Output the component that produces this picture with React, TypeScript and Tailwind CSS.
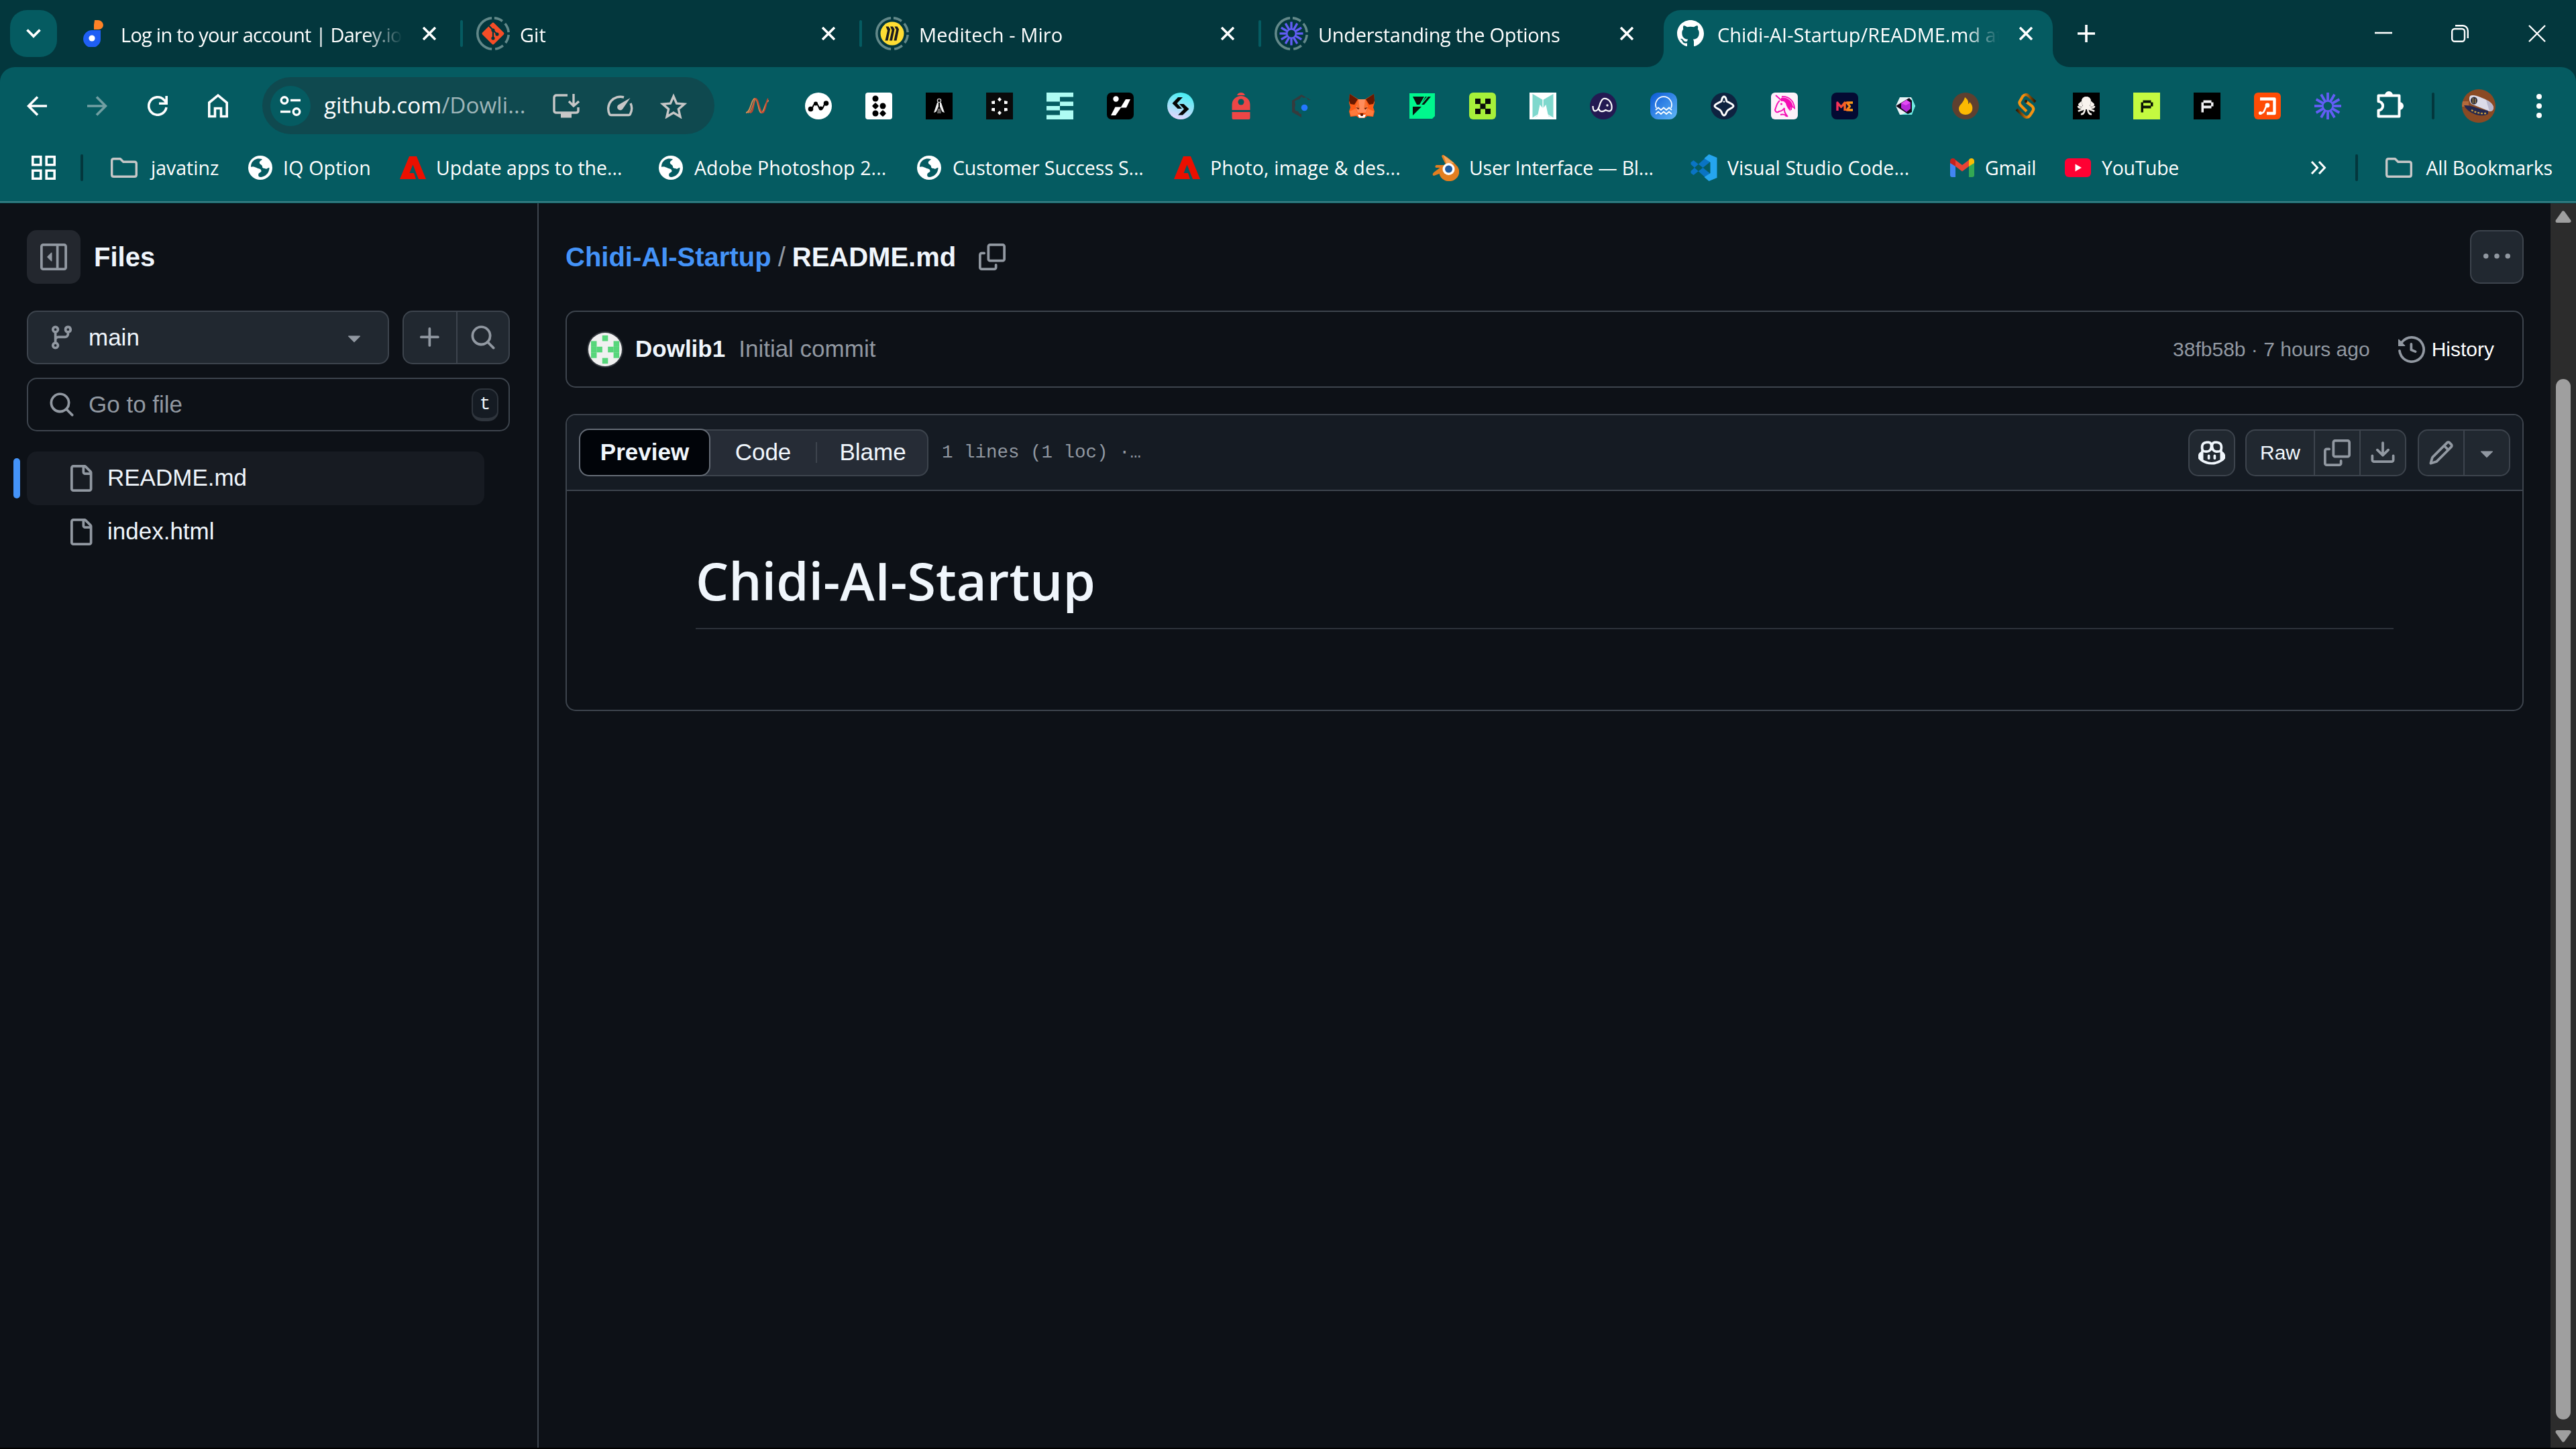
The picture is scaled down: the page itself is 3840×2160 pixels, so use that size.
import type { ReactNode } from "react";

/* ---------- Octicon-style 16px glyphs ---------- */
const OCT = {
  search:
    "M10.68 11.74a6 6 0 0 1-7.922-8.982 6 6 0 0 1 8.982 7.922l3.04 3.04a.749.749 0 0 1-.326 1.275.749.749 0 0 1-.734-.215ZM11.5 7a4.499 4.499 0 1 0-8.997 0A4.499 4.499 0 0 0 11.5 7Z",
  branch:
    "M9.5 3.25a2.25 2.25 0 1 1 3 2.122V6A2.5 2.5 0 0 1 10 8.5H6a1 1 0 0 0-1 1v1.128a2.251 2.251 0 1 1-1.5 0V5.372a2.25 2.25 0 1 1 1.5 0v1.836A2.493 2.493 0 0 1 6 7h4a1 1 0 0 0 1-1v-.628A2.25 2.25 0 0 1 9.5 3.25Zm-6 0a.75.75 0 1 0 1.5 0 .75.75 0 0 0-1.5 0Zm8.25-.75a.75.75 0 1 0 0 1.5.75.75 0 0 0 0-1.5ZM4.25 12a.75.75 0 1 0 0 1.5.75.75 0 0 0 0-1.5Z",
  plus: "M7.75 2a.75.75 0 0 1 .75.75V7h4.25a.75.75 0 0 1 0 1.5H8.5v4.25a.75.75 0 0 1-1.5 0V8.5H2.75a.75.75 0 0 1 0-1.5H7V2.75A.75.75 0 0 1 7.75 2Z",
  file: "M2 1.75C2 .784 2.784 0 3.75 0h6.586c.464 0 .909.184 1.237.513l2.914 2.914c.329.328.513.773.513 1.237v9.586A1.75 1.75 0 0 1 13.25 16h-9.5A1.75 1.75 0 0 1 2 14.25Zm1.75-.25a.25.25 0 0 0-.25.25v12.5c0 .138.112.25.25.25h9.5a.25.25 0 0 0 .25-.25V6h-2.75A1.75 1.75 0 0 1 9 4.25V1.5Zm6.75.062V4.25c0 .138.112.25.25.25h2.688l-.011-.013-2.914-2.914-.013-.011Z",
  copy: "M0 6.75C0 5.784.784 5 1.75 5h1.5a.75.75 0 0 1 0 1.5h-1.5a.25.25 0 0 0-.25.25v7.5c0 .138.112.25.25.25h7.5a.25.25 0 0 0 .25-.25v-1.5a.75.75 0 0 1 1.5 0v1.5A1.75 1.75 0 0 1 9.25 16h-7.5A1.75 1.75 0 0 1 0 14.25ZM5 1.75C5 .784 5.784 0 6.75 0h7.5C15.216 0 16 .784 16 1.75v7.5A1.75 1.75 0 0 1 14.25 11h-7.5A1.75 1.75 0 0 1 5 9.25Zm1.75-.25a.25.25 0 0 0-.25.25v7.5c0 .138.112.25.25.25h7.5a.25.25 0 0 0 .25-.25v-7.5a.25.25 0 0 0-.25-.25Z",
  download:
    "M2.75 14A1.75 1.75 0 0 1 1 12.25v-2.5a.75.75 0 0 1 1.5 0v2.5c0 .138.112.25.25.25h10.5a.25.25 0 0 0 .25-.25v-2.5a.75.75 0 0 1 1.5 0v2.5A1.75 1.75 0 0 1 13.25 14ZM7.25 7.689V2a.75.75 0 0 1 1.5 0v5.689l1.97-1.969a.749.749 0 1 1 1.06 1.06l-3.25 3.25a.749.749 0 0 1-1.06 0L4.22 6.78a.749.749 0 1 1 1.06-1.06l1.97 1.969Z",
  pencil:
    "M11.013 1.427a1.75 1.75 0 0 1 2.474 0l1.086 1.086a1.75 1.75 0 0 1 0 2.474l-8.61 8.61c-.21.21-.47.364-.756.445l-3.251.93a.75.75 0 0 1-.927-.928l.929-3.25c.081-.286.235-.547.445-.758l8.61-8.61Zm.176 4.823L9.75 4.81l-6.286 6.287a.253.253 0 0 0-.064.108l-.558 1.953 1.953-.558a.253.253 0 0 0 .108-.064Zm1.238-3.763a.25.25 0 0 0-.354 0L10.811 3.75l1.439 1.44 1.263-1.263a.25.25 0 0 0 0-.354Z",
  triangle: "m4.427 7.427 3.396 3.396a.25.25 0 0 0 .354 0l3.396-3.396A.25.25 0 0 0 11.396 7H4.604a.25.25 0 0 0-.177.427Z",
  history:
    "m.427 1.927 1.215 1.215a8.002 8.002 0 1 1-1.6 5.685.75.75 0 1 1 1.493-.154 6.5 6.5 0 1 0 1.18-4.458l1.358 1.358A.25.25 0 0 1 3.896 6H.25A.25.25 0 0 1 0 5.75V2.104a.25.25 0 0 1 .427-.177ZM7.75 4a.75.75 0 0 1 .75.75v2.992l2.028.812a.75.75 0 0 1-.557 1.392l-2.5-1A.751.751 0 0 1 7 8.25v-3.5A.75.75 0 0 1 7.75 4Z",
  sidebar:
    "M4.177 7.823l2.396-2.396A.25.25 0 0 1 7 5.604v4.792a.25.25 0 0 1-.427.177L4.177 8.177a.25.25 0 0 1 0-.354ZM0 1.75C0 .784.784 0 1.75 0h12.5C15.216 0 16 .784 16 1.75v12.5A1.75 1.75 0 0 1 14.25 16H1.75A1.75 1.75 0 0 1 0 14.25Zm1.75-.25a.25.25 0 0 0-.25.25v12.5c0 .138.112.25.25.25H9.5v-13Zm12.5 13a.25.25 0 0 0 .25-.25V1.75a.25.25 0 0 0-.25-.25H11v13Z",
  kebab:
    "M8 9a1.5 1.5 0 1 0 0-3 1.5 1.5 0 0 0 0 3ZM1.5 9a1.5 1.5 0 1 0 0-3 1.5 1.5 0 0 0 0 3Zm13 0a1.5 1.5 0 1 0 0-3 1.5 1.5 0 0 0 0 3Z",
  copilot:
    "M7.998 15.035c-4.562 0-7.873-2.914-7.998-3.749V9.338c.085-.628.677-1.686 1.588-2.065.013-.07.024-.143.036-.218.029-.183.06-.384.126-.612-.201-.508-.254-1.084-.254-1.656 0-.87.128-1.769.693-2.484.579-.733 1.494-1.124 2.724-1.261 1.206-.134 2.262.034 2.944.765.05.053.096.108.139.165.044-.057.094-.112.143-.165.682-.731 1.738-.899 2.944-.765 1.23.137 2.145.528 2.724 1.261.566.715.693 1.614.693 2.484 0 .572-.053 1.148-.254 1.656.066.228.098.429.126.612.012.076.024.148.037.218.924.385 1.522 1.471 1.591 2.095v1.872c0 .766-3.351 3.795-8.002 3.795Zm0-1.485c2.28 0 4.584-1.11 5.002-1.433V7.862l-.023-.116c-.49.21-1.075.291-1.727.291-1.146 0-2.059-.327-2.71-.991A3.222 3.222 0 0 1 8 6.303a3.24 3.24 0 0 1-.544.743c-.65.664-1.563.991-2.71.991-.652 0-1.236-.081-1.727-.291l-.023.116v4.255c.419.323 2.722 1.433 5.002 1.433ZM6.762 2.83c-.193-.206-.637-.413-1.682-.297-1.019.113-1.479.404-1.713.7-.247.312-.369.789-.369 1.554 0 .793.129 1.171.308 1.371.162.181.519.379 1.442.379.853 0 1.339-.235 1.638-.54.315-.322.527-.827.617-1.553.117-.935-.037-1.395-.241-1.614Zm4.155-.297c-1.044-.116-1.488.091-1.681.297-.204.219-.359.679-.242 1.614.091.726.303 1.231.618 1.553.299.305.784.54 1.638.54.922 0 1.28-.198 1.442-.379.179-.2.308-.578.308-1.371 0-.765-.123-1.242-.37-1.554-.233-.296-.693-.587-1.713-.7ZM6.25 9.037a.75.75 0 0 1 .75.75v1.501a.75.75 0 0 1-1.5 0V9.787a.75.75 0 0 1 .75-.75Zm4.25.75v1.501a.75.75 0 0 1-1.5 0V9.787a.75.75 0 0 1 1.5 0Z",
  github:
    "M8 0c4.42 0 8 3.58 8 8a8.013 8.013 0 0 1-5.45 7.59c-.4.08-.55-.17-.55-.38 0-.27.01-1.13.01-2.2 0-.75-.25-1.23-.54-1.48 1.78-.2 3.65-.88 3.65-3.95 0-.88-.31-1.59-.82-2.15.08-.2.36-1.02-.08-2.12 0 0-.67-.22-2.2.82-.64-.18-1.32-.27-2-.27-.68 0-1.36.09-2 .27-1.53-1.03-2.2-.82-2.2-.82-.44 1.1-.16 1.92-.08 2.12-.51.56-.82 1.28-.82 2.15 0 3.06 1.86 3.75 3.64 3.95-.23.2-.44.55-.51 1.07-.46.21-1.61.55-2.33-.66-.15-.24-.6-.83-1.23-.82-.67.01-.27.38.01.53.34.19.73.9.82 1.13.16.45.68 1.31 2.69.94 0 .67.01 1.3.01 1.49 0 .21-.15.45-.55.38A7.995 7.995 0 0 1 0 8c0-4.42 3.58-8 8-8Z",
};

function Oct({ name, className = "" }: { name: keyof typeof OCT; className?: string }) {
  return (
    <svg viewBox="0 0 16 16" fill="currentColor" className={`size-10 shrink-0 ${className}`}>
      <path d={OCT[name]} />
    </svg>
  );
}

/* 40x40 drawing surface used by favicons and toolbar icons */
function Pic({ children, className = "size-10" }: { children: ReactNode; className?: string }) {
  return (
    <svg viewBox="0 0 40 40" fill="none" className={`shrink-0 ${className}`}>
      {children}
    </svg>
  );
}

/* ---------- Tab strip ---------- */
function LoadingRing({ children }: { children: ReactNode }) {
  return (
    <svg viewBox="0 0 50 50" fill="none" className="size-[50px] shrink-0">
      <circle cx="25" cy="25" r="23.2" stroke="#628889" strokeWidth="3.6" pathLength="360" strokeDasharray="0 5 32 13 32 13 170 10 32 13 35 5" />
      {children}
    </svg>
  );
}

const RAYS = [0, 30, 60, 90, 120, 150, 180, 210, 240, 270, 300, 330];

function Burst({ cx, cy, r }: { cx: number; cy: number; r: number }) {
  return (
    <g transform={`translate(${cx} ${cy}) scale(${r / 20})`}>
      {RAYS.map((a) => (
        <rect key={a} x="-1.9" y="-20" width="3.8" height="13" fill="#625df5" transform={`rotate(${a})`} />
      ))}
      <circle r="7.6" stroke="#625df5" strokeWidth="2.6" />
    </g>
  );
}

function CloseX() {
  return (
    <svg viewBox="0 0 20 20" className="size-5 shrink-0" stroke="#fff" strokeWidth="3.6">
      <path d="M1 1 19 19M19 1 1 19" />
    </svg>
  );
}

function Tab({ icon, title, last }: { icon: ReactNode; title: ReactNode; last?: boolean }) {
  return (
    <div className={`flex h-[100px] shrink-0 items-center pl-5 ${last ? "w-[575px]" : "w-[595px]"}`}>
      <div className="flex w-[50px] shrink-0 justify-center">{icon}</div>
      <div className="ml-[15px] w-[420px] shrink-0 whitespace-nowrap pt-[3px] text-[29px] [mask-image:linear-gradient(to_right,black_87%,transparent)]">
        {title}
      </div>
      <div className="ml-[30px]">
        <CloseX />
      </div>
      {!last && <div className="ml-auto h-10 w-1 rounded-full bg-[#055b61]" />}
    </div>
  );
}

function TabStrip() {
  return (
    <div className="flex h-[100px] items-center bg-[#03373d] pl-[15px] text-white">
      <div className="mr-[10px] flex size-[70px] items-center justify-center rounded-[25px] bg-[#055b61]">
        <svg viewBox="0 0 22 14" className="w-[22px]" fill="none" stroke="#fff" strokeWidth="3.8">
          <path d="M1.5 1.5 11 11 20.5 1.5" />
        </svg>
      </div>
      <Tab
        title={<span className="tracking-[-0.75px]">Log in to your account | Darey.io</span>}
        icon={
          <Pic>
            <path d="M22 0h5a8 8 0 0 1 8 7v0a7 7 0 0 1-7 7h-7V7Z" transform="translate(-1)" fill="#ff8226" />
            <path d="M17 15h13v12a13 13 0 1 1-13-12Z" fill="#1f5ff5" />
            <circle cx="17" cy="27" r="4.6" fill="#fff" />
          </Pic>
        }
      />
      <Tab
        title="Git"
        icon={
          <LoadingRing>
            <rect x="12.8" y="12.8" width="24.4" height="24.4" rx="2" fill="#f64d27" transform="rotate(45 25 25)" />
            <path d="m19 13.5 6 6.5v12M25.500 20.500l5 5" stroke="#03373d" strokeWidth="2.2" />
            <circle cx="25" cy="20" r="2.600" fill="#03373d" />
            <circle cx="25" cy="32" r="2.600" fill="#03373d" />
            <circle cx="31" cy="26" r="2.600" fill="#03373d" />
          </LoadingRing>
        }
      />
      <Tab
        title={<span className="tracking-[0.1px]">Meditech - Miro</span>}
        icon={
          <LoadingRing>
            <circle cx="25" cy="25" r="17.500" fill="#ffdd33" />
            <path d="M15.500 14.500h4l2.500 4-3.500 17h-4l3.500-15Z M22 14.500h4l2.500 4-3.500 17h-4l3.500-15.500Z M28.500 14.500h4l2.500 4-3.500 17h-4l3.500-16Z" fill="#1c1c1e" />
          </LoadingRing>
        }
      />
      <Tab
        last
        title={<span className="tracking-[-0.3px]">Understanding the Options</span>}
        icon={
          <LoadingRing>
            <Burst cx={25} cy={25} r={17.5} />
          </LoadingRing>
        }
      />
      {/* active tab with its two concave feet */}
      <div className="size-[25px] self-end bg-[#055b61]">
        <div className="size-full rounded-br-[25px] bg-[#03373d]" />
      </div>
      <div className="mt-[15px] flex h-[85px] w-[580px] shrink-0 items-center rounded-t-[25px] bg-[#055b61] pb-[15px] pl-5">
        <Oct name="github" />
        <div className="ml-5 w-[420px] shrink-0 whitespace-nowrap pt-[3px] text-[29px] [mask-image:linear-gradient(to_right,black_88%,transparent)]">
          Chidi-AI-Startup/README.md at
        </div>
        <div className="ml-[30px]">
          <CloseX />
        </div>
      </div>
      <div className="size-[25px] self-end bg-[#055b61]">
        <div className="size-full rounded-bl-[25px] bg-[#03373d]" />
      </div>
      <svg viewBox="0 0 26 26" className="ml-3 size-[26px]" stroke="#fff" strokeWidth="3.600">
        <path d="M13 0v26M0 13h26" />
      </svg>
      <svg viewBox="0 0 26 26" className="ml-auto size-[26px]" stroke="#fff" strokeWidth="2.600">
        <path d="M0 12h26" />
      </svg>
      <svg viewBox="0 0 26 26" className="ml-[88px] size-[26px]" fill="none" stroke="#fff" strokeWidth="2.400">
        <rect x="1.200" y="6" width="18.800" height="18.800" rx="4" />
        <path d="M6 1.200h11a7.500 7.500 0 0 1 7.800 7.500V20" />
      </svg>
      <svg viewBox="0 0 26 26" className="ml-[89px] mr-[45px] size-[26px]" stroke="#fff" strokeWidth="2.400">
        <path d="M1 1 25 25M25 1 1 25" />
      </svg>
    </div>
  );
}

/* ---------- Extension icons, left to right ---------- */
const PIXEL_P = "M14.500 11.500h12v3h3v6h-3v3H15v6h-3.500V14.500h3Zm.5 4v4h11v-4Z";

const EXTENSIONS: ReactNode[] = [
  <>
    <path d="M2 30c7 0 8-21 13-21 6 0 5 21 10 21 5-1 5-17 11-18" stroke="#d98d55" strokeWidth="1.900" />
    <path d="M8 30c6 0 5-16 8-21 5-1 6 21 11 21 5-2 5-19 8-21" stroke="#c2452f" strokeWidth="1.900" />
    <path d="M5 30c6 0 8-17 11-21" stroke="#d4703f" strokeWidth="1.400" />
  </>,
  <>
    <circle cx="20" cy="20" r="20" fill="#fff" />
    <path d="M8 25c4 0 4-9 8-9s4 9 8 9 3-9 8-9" stroke="#000" strokeWidth="2" />
    <circle cx="8.500" cy="24.500" r="3.800" fill="#000" />
    <circle cx="16" cy="16.500" r="3" fill="#000" />
    <circle cx="23.500" cy="23.500" r="3" fill="#000" />
    <circle cx="31.500" cy="16" r="3.800" fill="#000" />
  </>,
  <>
    <rect width="40" height="40" rx="4" fill="#fff" />
    <circle cx="15" cy="9" r="4.500" fill="#000" />
    <path d="m15 15 5 5-5 5-5-5Z" fill="#000" />
    <circle cx="26" cy="20" r="4.500" fill="#000" />
    <circle cx="15" cy="31" r="4.500" fill="#000" />
    <path d="m26 26 5 5-5 5-5-5Z" fill="#000" />
    <circle cx="15" cy="20" r="3.600" fill="#000" />
    <circle cx="26" cy="31" r="3.600" fill="#000" />
  </>,
  <>
    <rect width="40" height="40" fill="#000" />
    <circle cx="20" cy="12" r="2.600" stroke="#ccc" strokeWidth="1.400" />
    <path d="m17 15-5 15 3.500-1.500L19 21v-6Zm6 0 5 15-3.500-1.500L21 21v-6Z" fill="#eee" />
    <path d="M18 24h4l1 7h-6Z" fill="#666" />
  </>,
  <>
    <rect width="40" height="40" fill="#0a0a0a" />
    <path d="m20 7 3 3.200-3 3.200-3-3.200ZM20 27l3 3.200-3 3.200-3-3.200ZM8 13l5-1v5H8.500ZM27 12l5 1-.5 4H27ZM8.500 23H13v5l-5-1ZM27 23h4.500l.5 4-5 1Z" fill="#fff" />
  </>,
  <path d="M0 0h40v6.500H20v7h20v6.500H20v6.500h20V40H0v-6.500h20v-7H0V20h20v-6.500H0Z" fill="#aefcf3" />,
  <>
    <rect width="40" height="40" rx="7" fill="#000" />
    <circle cx="13.500" cy="9.500" r="4.200" fill="#fff" />
    <path d="M28 10h7l-6 12.500h-8L13 34H6l6.500-12.500H21Z" fill="#fff" />
  </>,
  <>
    <defs>
      <linearGradient id="bitget" x1=".7" y1="0" x2=".4" y2="1">
        <stop offset="0" stopColor="#3ff0f2" />
        <stop offset=".55" stopColor="#9ae2f8" />
        <stop offset="1" stopColor="#e6d5ff" />
      </linearGradient>
    </defs>
    <circle cx="20" cy="20" r="20" fill="url(#bitget)" />
    <path d="M16 7h7l-8.500 9 7.500 8h-6.500l-8-8ZM18 17h6.500l8 7.500-9.500 9h-7l9-9Z" fill="#050505" />
  </>,
  <>
    <path d="M14 4a6.500 6.500 0 0 1 12 0ZM6.500 26V18a13.500 13 0 0 1 27 0v8ZM6.500 29h27v9a2 2 0 0 1-2 2h-23a2 2 0 0 1-2-2Z" fill="#ee4646" />
    <circle cx="20" cy="14" r="4.500" fill="#055b61" />
  </>,
  <>
    <path d="M34 11 20 3 6 12v17l14 8v-5l-3-1-2-3-4-1-1-4 1-5-1-5 3-2 4-1 3-4 3 2 4-1 3 4Z" fill="#363b3d" />
    <circle cx="24.500" cy="22.500" r="4.800" fill="#2478ff" />
  </>,
  <>
    <path d="M2 2 15 10h10L38 2l1 13-2 7 2 6-2 8-9-1-4 3h-8l-4-3-9 1-2-8 2-6-2-7Z" fill="#ff5c16" />
    <path d="M2 2 14 10 9 18l-6-1-2-5ZM38 2 26 10l5 8 6-1 2-5Z" fill="#661800" />
    <path d="M15 10h10l4 12-3 8H14l-3-8Z" fill="#ff8d5d" />
    <path d="m15 10-4 10 6 5ZM25 10l4 10-6 5Z" fill="#f9702f" />
    <path d="m2 28 9-4 4 9-11 2ZM38 28l-9-4-4 9 11 2Z" fill="#ff7a3c" />
    <path d="M14 33h12l-2 4.500h-8Z" fill="#fff" />
    <path d="M17.500 31h5l-1 4h-3ZM11 22l5 1-1 2.500ZM29 22l-5 1 1 2.500Z" fill="#661800" />
  </>,
  <>
    <path d="M1 1h38v34l-4 4H1Z" fill="#00f78d" />
    <path d="M6 6h17l-7 12h-4ZM25 6h8l-10 12h-5ZM6 21h13L6 34Z" fill="#0a120e" />
    <path d="M28 6 18 18" stroke="#00f78d" strokeWidth="1.500" />
  </>,
  <>
    <rect width="40" height="40" rx="6" fill="#a6f03a" />
    <path d="M9 9h8v8H9ZM24 9h8v8h-8ZM16.500 16.500h8v8h-8ZM9 24h8v8H9ZM24 24h8v8h-8Z" fill="#0a0a0a" />
  </>,
  <>
    <rect width="40" height="40" fill="#fff" />
    <path d="M4.500 2 20 11 35.500 2v36L28 35 24.500 18 20 23.500 15.500 18 12 35l-7.500 3Z" fill="#7fd8cd" />
    <path d="M20 10v14M4.500 38 13 33M35.500 38 27 33" stroke="#fff" strokeWidth="1.400" />
  </>,
  <>
    <circle cx="20" cy="20" r="20" fill="#231a52" />
    <path d="M4.500 20c0 7 2 8 5 7 6-2 4-15 11-18 8-1 13 7 12 15-1 5-5 4-9 2-4 3-10 3-10-2" stroke="#fff" strokeWidth="2.200" />
    <circle cx="26" cy="19" r="1.700" fill="#fff" />
  </>,
  <>
    <defs>
      <linearGradient id="wave" x1="0" y1="0" x2="1" y2="1">
        <stop offset="0" stopColor="#0a58d6" />
        <stop offset="1" stopColor="#62b8f8" />
      </linearGradient>
    </defs>
    <rect width="40" height="40" rx="12" fill="url(#wave)" />
    <path d="M9 23a12 12 0 1 1 22 0M8 26l4-3.500 4 3.500 4-3.500 4 3.500 4-3.500 4 3.500M8 32l4-3.500 4 3.500 4-3.500 4 3.500 4-3.500 4 3.500" stroke="#fff" strokeWidth="1.800" />
  </>,
  <>
    <circle cx="20" cy="20" r="20" fill="#0e2340" />
    <path d="M20 6c3 0 3 4 4 7 3 2 10 4 10 7s-7 4-9 7c-2 2-2 7-5 7s-3-5-5-7c-2-3-9-4-9-7s7-5 10-7c1-3 1-7 4-7Z" stroke="#fff" strokeWidth="3" />
    <circle cx="20" cy="13.500" r="1.200" fill="#fff" />
  </>,
  <>
    <rect width="40" height="40" rx="6" fill="#fdf1fa" />
    <path d="m7 4 9 8M16 6c9-1 18 5 19 17-3-3-5-2-5 3" stroke="#f50db4" strokeWidth="1.800" />
    <path d="M15 8c8-2 17 4 18 14-3-2-5 0-4 6-3-3-6-7-7-12-2-3-4-4-7-3Z" fill="#f50db4" />
    <path d="M13 12c-4 3-5 8-7 14 1 4 4 4 6 2 3 0 6-2 8-5-1 5 1 8 5 13M14 33c4-1 8 0 9 3" stroke="#f50db4" strokeWidth="2" />
    <circle cx="15.500" cy="17" r="1.500" fill="#f50db4" />
  </>,
  <>
    <defs>
      <linearGradient id="me" x1="0" y1="0" x2="40" y2="0" gradientUnits="userSpaceOnUse">
        <stop offset=".15" stopColor="#f5206b" />
        <stop offset=".5" stopColor="#f8641f" />
        <stop offset=".85" stopColor="#ffb713" />
      </linearGradient>
    </defs>
    <rect width="40" height="40" rx="8" fill="#040a33" />
    <path d="M9 27V15l5.500 6.500L20 15l0 12M32 15h-9l4.500 5.500L23 26h9" stroke="url(#me)" strokeWidth="3.400" strokeLinejoin="round" />
  </>,
  <>
    <path d="M12 7h17l6 13-6 13H12L6 20Z" fill="#e8f3f6" />
    <path d="m30 8 5 12-5 13H14l14-5Z" fill="#6febe4" />
    <path d="M26 8 30 12v17l-6 3L6 20Z" fill="#150b1c" />
    <path d="m14 16 8-5 6 4v9l-6 5-8-6Z" fill="#b727d8" />
    <path d="m14 16 8-5 6 4-7 4Z" fill="#e44af5" />
  </>,
  <>
    <circle cx="20" cy="20" r="20" fill="#5e4030" />
    <path d="M19 7c6 4 5 8 5 10 1 0 2-2 2-3 4 4 5 8 4 12-1 4-5 7-10 7-6 0-10-4-10-9 0-6 7-8 9-17Z" fill="#fcb902" />
  </>,
  <>
    <defs>
      <linearGradient id="sgTop" x1="1" y1=".4" x2="0" y2=".6">
        <stop offset="0" stopColor="#2b1400" />
        <stop offset=".6" stopColor="#f28d10" />
        <stop offset="1" stopColor="#f79512" />
      </linearGradient>
      <linearGradient id="sgBottom" x1="0" y1=".6" x2="1" y2=".4">
        <stop offset="0" stopColor="#2b1400" />
        <stop offset=".6" stopColor="#f28d10" />
        <stop offset="1" stopColor="#f79512" />
      </linearGradient>
    </defs>
    <path d="M34 14 24 5c-3-3-7-2-9 1l-4 7c-2 3 0 5 2 7l8 8" stroke="url(#sgTop)" strokeWidth="4.200" />
    <path d="m6 25 11 10c3 3 7 2 9-1l4-6c2-3 1-6-1-8l-8-6" stroke="url(#sgBottom)" strokeWidth="4.200" />
    <circle cx="20" cy="13" r="2.200" fill="#3b1a00" />
  </>,
  <>
    <rect width="40" height="40" fill="#000" />
    <path d="M20 6c5 0 8 4 7 9l-2 6c3 1 7 0 7-4M20 6c-5 0-8 4-7 9l2 6c-3 1-7 0-7-4" fill="#f8f3ee" />
    <ellipse cx="20" cy="14" rx="7" ry="8" fill="#f8f3ee" />
    <path d="M16 20c-1 5-8 3-8 0m24 0c0 3-7 5-8 0M17 22c-1 5-6 3-9 6m15-6c1 5 6 3 9 6M18 23c0 5-2 10-6 9m10-9c0 5 2 10 6 9" stroke="#f8f3ee" strokeWidth="2.600" />
    <path d="M15 17h10v8H15Z" fill="#f8f3ee" />
  </>,
  <>
    <rect width="40" height="40" fill="#c4fa40" />
    <path d={PIXEL_P} fill="#0b1405" fillRule="evenodd" />
  </>,
  <>
    <rect width="40" height="40" fill="#000" />
    <path d={PIXEL_P} fill="#f1f1f4" fillRule="evenodd" />
  </>,
  <>
    <rect width="40" height="40" rx="6" fill="#ff4c05" />
    <path d="M9 9.500h21.500V31H19" stroke="#fff" strokeWidth="4.400" strokeLinejoin="round" />
    <path d="M9 31c7 0 6-5 9.500-11" stroke="#fff" strokeWidth="2.600" />
    <circle cx="20" cy="19" r="3.400" fill="#fff" />
    <circle cx="9.500" cy="30.500" r="2.600" fill="#fff" />
  </>,
  <Burst cx={20} cy={20} r={20} />,
];

function Folder() {
  return (
    <svg viewBox="0 0 40 30" className="h-[30px] w-10 shrink-0" fill="none" stroke="#c7c7c7" strokeWidth="3.400" strokeLinejoin="round">
      <path d="M1.700 4.500c0-1.600 1.200-2.800 2.800-2.800h9.800l4.500 4.500h16.700c1.600 0 2.800 1.200 2.800 2.800v16.500c0 1.600-1.200 2.800-2.800 2.800h-31c-1.600 0-2.800-1.200-2.800-2.800Z" />
    </svg>
  );
}

function Toolbar() {
  return (
    <div className="bg-[#03373d]">
      <div className="flex h-[115px] items-center rounded-t-[22px] bg-[#055b61] text-white">
        <svg viewBox="0 0 30 30" className="ml-10 size-[30px]" fill="none" stroke="#fff" strokeWidth="3.600">
          <path d="M30 15H3M16 1.500 2.500 15 16 28.500" />
        </svg>
        <svg viewBox="0 0 30 30" className="ml-[60px] size-[30px]" fill="none" stroke="#719fa2" strokeWidth="3.600">
          <path d="M0 15h27M14 1.500 27.500 15 14 28.500" />
        </svg>
        <svg viewBox="0 0 30 30" className="ml-[60px] size-[30px]" fill="none" stroke="#fff" strokeWidth="3.600">
          <path d="M28 17a13.200 13.200 0 1 1-3.700-11.300L28 9.500M28.200 0v11.200H17" />
        </svg>
        <svg viewBox="0 0 30 36" className="ml-[60px] h-9 w-[30px]" fill="none" stroke="#fff" strokeWidth="3.600">
          <path d="M1.800 13 15 2.200 28.200 13v20.500h-8.700V21.500h-9v12H1.800Z" />
        </svg>
        <div className="ml-[51px] flex h-[85px] w-[674px] shrink-0 items-center rounded-full bg-[#0f494f] pl-3">
          <div className="flex size-[60px] items-center justify-center rounded-full bg-[#055b61]">
            <svg viewBox="0 0 32 30" className="h-[30px] w-8" fill="none" stroke="#fff" strokeWidth="3.400">
              <circle cx="7" cy="6.500" r="4.800" />
              <path d="M16 6.500h15M1 23.500h15" />
              <circle cx="25" cy="23.500" r="4.800" />
            </svg>
          </div>
          <div className="ml-[20px] w-[303px] whitespace-nowrap pb-0.5 text-[33.300px]">
            github.com<span className="text-[#9fb6b9]">/Dowli...</span>
          </div>
          <div className="ml-[38px] flex items-center gap-10">
            <svg viewBox="0 0 40 36" className="h-9 w-10" fill="none" stroke="#c7c7c7" strokeWidth="3.400">
              <path d="M22 2H5.500Q2 2 2 5.500v19.500Q2 28 5.500 28h29q3.500 0 3.500-3v-5M31 0v17M24 11l7 7 8-7" />
              <path d="M12 29h16v6.500H12Z" fill="#c7c7c7" stroke="none" />
            </svg>
            <svg viewBox="0 0 40 32" className="h-8 w-10" fill="none" stroke="#c7c7c7" strokeWidth="3.400">
              <path d="M26 3A18 18 0 0 0 4.500 28Q5 29.500 7 29.500h26q2 0 2.500-1.500A18 18 0 0 0 36 12" />
              <path d="M35.500 4 24.500 20a4.500 4.500 0 1 1-7-5.500Z" fill="#c7c7c7" stroke="none" />
            </svg>
            <svg viewBox="0 0 40 38" className="h-[38px] w-10" fill="none" stroke="#c7c7c7" strokeWidth="3.400">
              <path d="m20 4.500 4.600 10.600 11.500 1-8.700 7.600 2.600 11.300L20 29l-10 6 2.600-11.300-8.700-7.600 11.500-1Z" />
            </svg>
          </div>
        </div>
        <div className="ml-[45px] flex shrink-0 gap-[50px]">
          {EXTENSIONS.map((icon, i) => (
            <Pic key={i}>{icon}</Pic>
          ))}
        </div>
        <svg viewBox="0 0 42 42" className="-mt-1 ml-[51px] h-[42px] w-[42px]" fill="none" stroke="#fff" strokeWidth="4" strokeLinejoin="round">
          <path d="M4.500 7.500h31v31h-31v-9a6.600 6.600 0 0 0 0-13.200Z" />
          <path d="M14 7a6 6 0 0 1 12 0ZM36 17a6 6 0 0 1 0 12Z" fill="#fff" stroke="none" />
        </svg>
        <div className="ml-[42px] h-10 w-1 rounded-full bg-[#03373d]" />
        <svg viewBox="0 0 50 50" className="ml-[41px] size-[50px]">
          <defs>
            <clipPath id="profile">
              <circle cx="25" cy="25" r="25" />
            </clipPath>
          </defs>
          <g clipPath="url(#profile)">
            <path d="M0 0h50v50H0Z" fill="#8a4a24" />
            <path d="M0 18h10v8H0Z" fill="#b26a3c" />
            <path d="M12 10q5-3 18 3 16 6 17 14 0 6-6 6L14 22Q9 16 12 10Z" fill="#dcdbe8" />
            <path d="M36 16q10 5 11 11 0 6-6 6Z" fill="#b9b7cc" />
            <path d="M3 24q10 0 17 3 10 4 19 5v5q-7 4-18 1Q7 33 3 24Z" fill="#23274f" />
            <path d="M14 31q10 6 22 5" stroke="#c99a3b" strokeWidth="2.400" strokeDasharray="3 2" fill="none" />
            <ellipse cx="18" cy="17" rx="5" ry="5.500" fill="#2b2b3d" />
            <path d="M16.500 13v8M20 14v7" stroke="#a58546" strokeWidth="1.400" />
          </g>
        </svg>
        <svg viewBox="0 0 8 36" className="ml-[61px] h-9 w-2" fill="#fff">
          <circle cx="4" cy="4" r="4" />
          <circle cx="4" cy="18" r="4" />
          <circle cx="4" cy="32" r="4" />
        </svg>
      </div>
    </div>
  );
}

/* ---------- Bookmarks bar ---------- */
function Globe() {
  return (
    <svg viewBox="0 0 36 36" className="size-9 shrink-0">
      <circle cx="18" cy="18" r="18" fill="#fff" />
      <path d="M4 17C4 10 8 6 14 4.500c3 0 6 0 7 1-3 3-5 3-4 6 1 2 4 2 4 5s3 2 5 3 3-2 5.500-1.500c0 8-6 13.500-13 14-3 0-4-2-3-5 1-2 4-2 4-4 0-4-4-3-7-5-3-1-5-2-8.500-1Z" fill="#055b61" />
      <path d="M14 7c-2 3-1 6 1 7 2 2 5 1 5 4 1 3 3 2 3 5 0 2-3 3-4 5" stroke="#055b61" strokeWidth="2" fill="none" />
    </svg>
  );
}

function Adobe() {
  return (
    <svg viewBox="0 0 39 34" className="h-[34px] w-[39px] shrink-0" fill="#eb1000">
      <path d="M14 0h11l14 34H28L19.500 12.500 14.500 25h6.500l3 9H0Z" />
    </svg>
  );
}

const blender = (
  <Pic className="h-10 w-[41px]">
    <path d="M17 1c3 1 14 9 19 15a15 14 0 1 1-25 13L3 32c-3-1-2-4 1-6l8-6H6c-2-1-1-4 1-4h14L15 4c-1-2 0-3 2-3Z" fill="#e37e20" />
    <path d="M17 1 33 13 22 15Z" fill="#f5a55a" />
    <circle cx="25" cy="22" r="9" fill="#fff" />
    <circle cx="25" cy="22" r="5.500" fill="#1f5a9e" />
  </Pic>
);

const vscode = (
  <Pic className="h-10 w-[41px]">
    <path d="M29 12 5 31 1 28v-3l22-20ZM29 28 5 9 1 12v3l22 20Z" fill="#0a74c4" />
    <path d="m28 0 12 5v30l-12 5-7-6 9-6V12l-9-6Z" fill="#25a5ef" />
  </Pic>
);

const gmail = (
  <svg viewBox="0 0 36 28" className="h-7 w-9 shrink-0">
    <path d="M0 6h8v22H3q-3 0-3-3Z" fill="#4285f4" />
    <path d="M28 6h8v19q0 3-3 3h-5Z" fill="#34a853" />
    <path d="M8 12 18 19.500 28 12V2.500L18 10 8 2.500Z" fill="#ea4335" />
    <path d="M0 4.500Q0 0 4.500 0 6.500 0 8 2v10L0 7Z" fill="#c5221f" />
    <path d="M36 4.500Q36 0 31.500 0 29.500 0 28 2v10l8-5Z" fill="#fbbc04" />
  </svg>
);

const youtube = (
  <svg viewBox="0 0 39 28" className="h-7 w-[39px] shrink-0">
    <rect width="39" height="28" rx="6" fill="#ff0033" />
    <path d="m15.500 8.500 9.500 5.500-9.500 5.500Z" fill="#fff" />
  </svg>
);

const text = "shrink-0 whitespace-nowrap";

function BookmarksBar() {
  return (
    <div className="flex h-[85px] items-center bg-[#055b61] pb-[15px] pl-[47px] text-[28.500px] text-white">
      <svg viewBox="0 0 36 36" className="size-9 shrink-0" fill="none" stroke="#fff" strokeWidth="3.600">
        <path d="M1.800 1.800h12v12h-12ZM22.200 1.800h12v12h-12ZM1.800 22.200h12v12h-12ZM22.200 22.200h12v12h-12Z" />
      </svg>
      <div className="ml-[37px] h-10 w-1 shrink-0 rounded-full bg-[#03373d]" />
      <div className="ml-[41px] flex w-[205px] shrink-0 items-center gap-5">
        <Folder />
        <span className={text}>javatinz</span>
      </div>
      <div className="flex w-[226px] shrink-0 items-center gap-4">
        <Globe />
        <span className={`${text} tracking-[0.2px]`}>IQ Option</span>
      </div>
      <div className="flex w-[386px] shrink-0 items-center gap-[15px]">
        <Adobe />
        <span className={text}>Update apps to the...</span>
      </div>
      <div className="flex w-[385px] shrink-0 items-center gap-[17px]">
        <Globe />
        <span className={`${text} tracking-[0.1px]`}>Adobe Photoshop 2...</span>
      </div>
      <div className="flex w-[383px] shrink-0 items-center gap-[17px]">
        <Globe />
        <span className={`${text} tracking-[-0.1px]`}>Customer Success S...</span>
      </div>
      <div className="flex w-[384px] shrink-0 items-center gap-[15px]">
        <Adobe />
        <span className={`${text} tracking-[0.2px]`}>Photo, image &amp; des...</span>
      </div>
      <div className="flex w-[385px] shrink-0 items-center gap-[15px]">
        {blender}
        <span className={`${text} tracking-[-0.200px]`}>User Interface — Bl...</span>
      </div>
      <div className="flex w-[388px] shrink-0 items-center gap-[15px]">
        {vscode}
        <span className={`${text} tracking-[0.1px]`}>Visual Studio Code...</span>
      </div>
      <div className="flex w-[171px] shrink-0 items-center gap-4">
        {gmail}
        <span className={`${text} tracking-[-0.200px]`}>Gmail</span>
      </div>
      <div className="flex shrink-0 items-center gap-4">
        {youtube}
        <span className={`${text} tracking-[-0.300px]`}>YouTube</span>
      </div>
      <svg viewBox="0 0 24 20" className="ml-auto h-5 w-6 shrink-0" fill="none" stroke="#fff" strokeWidth="3">
        <path d="m2 1 8.500 9L2 19M13 1l8.500 9L13 19" />
      </svg>
      <div className="ml-[43px] h-10 w-1 shrink-0 rounded-full bg-[#03373d]" />
      <div className="ml-[41px] mr-[35px] flex shrink-0 items-center gap-5">
        <Folder />
        <span className={`${text} tracking-[-0.100px]`}>All Bookmarks</span>
      </div>
    </div>
  );
}

/* ---------- Repository page ---------- */
function FileRow({ name, active }: { name: string; active?: boolean }) {
  return (
    <div className="flex items-center gap-[10px]">
      <div className={`h-[60px] w-[10px] rounded-full ${active ? "bg-[#4493f8]" : ""}`} />
      <div className={`flex h-20 w-[682px] items-center gap-5 rounded-[15px] pl-[60px] ${active ? "bg-[#171b22]" : ""}`}>
        <Oct name="file" className="text-[#9198a1]" />
        <span className="pb-0.5 text-[35px] text-[#f0f6fc]">{name}</span>
      </div>
    </div>
  );
}

function Sidebar() {
  return (
    <aside className="h-full w-[803px] shrink-0 border-r-2 border-[#3d444d] pt-10 text-[#9198a1]">
      <div className="flex items-center pl-10">
        <div className="flex size-20 items-center justify-center rounded-[15px] bg-[#23272e]">
          <Oct name="sidebar" />
        </div>
        <h2 className="ml-5 text-[40px] font-bold text-[#f0f6fc]">Files</h2>
      </div>
      <div className="mt-10 flex pl-10">
        <div className="flex h-20 w-[540px] items-center rounded-[15px] border-2 border-[#3d444d] bg-[#212830] pl-[30px] pr-[30px]">
          <Oct name="branch" />
          <span className="ml-5 text-[35px] text-[#f0f6fc]">main</span>
          <Oct name="triangle" className="ml-auto" />
        </div>
        <div className="ml-5 flex h-20 w-40 rounded-[15px] border-2 border-[#3d444d] bg-[#212830]">
          <div className="flex w-20 items-center justify-center border-r-2 border-[#3d444d]">
            <Oct name="plus" />
          </div>
          <div className="flex flex-1 items-center justify-center">
            <Oct name="search" />
          </div>
        </div>
      </div>
      <div className="ml-10 mt-5 flex h-20 w-[720px] items-center rounded-[15px] border-2 border-[#3d444d] pl-[30px] pr-[15px]">
        <Oct name="search" />
        <span className="ml-5 text-[35px]">Go to file</span>
        <kbd className="ml-auto flex h-[49px] w-10 items-center justify-center rounded-[15px] border-2 border-b-[5px] border-[#2f353d] bg-[#151b23] pt-0.5 font-['Liberation_Mono',monospace] text-[27.500px] text-[#f0f6fc]">
          t
        </kbd>
      </div>
      <div className="mt-[30px] pl-5">
        <FileRow name="README.md" active />
        <FileRow name="index.html" />
      </div>
    </aside>
  );
}

const GREEN_CELLS = [[2, 0], [0, 1], [4, 1], [0, 2], [1, 2], [3, 2], [4, 2], [0, 3], [4, 3], [2, 4]];

function Identicon() {
  return (
    <svg viewBox="0 0 54 54" className="size-[54px] shrink-0">
      <circle cx="27" cy="27" r="27" fill="#30353b" />
      <circle cx="27" cy="27" r="25" fill="#f0f0f0" />
      {GREEN_CELLS.map(([x, y]) => (
        <rect key={`${x}-${y}`} x={6 + x * 8.4} y={6 + y * 8.4} width="8.500" height="8.500" fill="#57d67b" />
      ))}
    </svg>
  );
}

function Main() {
  return (
    <main className="flex-1 pl-10 pr-10 pt-10 text-[#9198a1]">
      <div className="flex h-20 items-center text-[40px]">
        <span className="font-bold text-[#4493f8]">Chidi-AI-Startup</span>
        <span className="mx-[10px]">/</span>
        <span className="font-bold text-[#f0f6fc]">README.md</span>
        <Oct name="copy" className="ml-[34px]" />
        <div className="ml-auto flex size-20 items-center justify-center rounded-[15px] border-2 border-[#3d444d] bg-[#212830]">
          <Oct name="kebab" />
        </div>
      </div>

      <div className="mt-10 flex h-[115px] items-center rounded-[15px] border-2 border-[#3d444d] pl-[30px] pr-[42px]">
        <Identicon />
        <span className="ml-[18px] text-[35px] font-bold text-[#f0f6fc]">Dowlib1</span>
        <span className="ml-5 text-[35px]">Initial commit</span>
        <span className="ml-auto text-[30px]">38fb58b · 7 hours ago</span>
        <Oct name="history" className="ml-[42px]" />
        <span className="ml-[10px] text-[30px] text-white">History</span>
      </div>

      <div className="mt-[39px] h-[443px] rounded-[15px] border-2 border-[#3d444d]">
        <div className="flex h-[113px] items-center rounded-t-[13px] border-b-2 border-[#3d444d] bg-[#151b23] pl-[18px] pr-[18px]">
          <div className="flex h-[70px] w-[521px] items-center rounded-[15px] bg-[#262c36] text-[35px] text-[#f0f6fc] shadow-[inset_0_0_0_2px_#3d444d]">
            <div className="flex h-[71px] w-[196px] items-center justify-center rounded-[15px] border-2 border-[#656c76] bg-[#010409] font-bold">
              Preview
            </div>
            <div className="flex w-[157px] justify-center">Code</div>
            <div className="h-[31px] w-0.5 bg-[#3d444d]" />
            <div className="flex flex-1 justify-center">Blame</div>
          </div>
          <span className="ml-5 whitespace-nowrap font-['Liberation_Mono',monospace] text-[27.500px]">1 lines (1 loc) ·…</span>
          <div className="ml-auto flex size-[70px] items-center justify-center rounded-[15px] border-2 border-[#3d444d] bg-[#212830] text-[#f0f6fc]">
            <Oct name="copilot" />
          </div>
          <div className="ml-[15px] flex h-[70px] w-60 rounded-[15px] border-2 border-[#3d444d] bg-[#212830]">
            <div className="flex w-[102px] items-center justify-center border-r-2 border-[#3d444d] text-[30px] text-[#f0f6fc]">Raw</div>
            <div className="flex w-[68px] items-center justify-center border-r-2 border-[#3d444d]">
              <Oct name="copy" />
            </div>
            <div className="flex flex-1 items-center justify-center">
              <Oct name="download" />
            </div>
          </div>
          <div className="ml-[17px] flex h-[70px] w-[138px] rounded-[15px] border-2 border-[#3d444d] bg-[#212830]">
            <div className="flex w-[68px] items-center justify-center border-r-2 border-[#3d444d]">
              <Oct name="pencil" />
            </div>
            <div className="flex flex-1 items-center justify-center">
              <Oct name="triangle" />
            </div>
          </div>
        </div>
        <article className="mx-48 flex h-[206px] items-end border-b-2 border-[#2c323a] pb-[22px]">
          <h1 className="whitespace-nowrap font-['Open_Sans',sans-serif] text-[77.700px] font-semibold leading-[1.25] text-[#f0f6fc]">
            Chidi-AI-Startup
          </h1>
        </article>
      </div>
    </main>
  );
}

function Scrollbar() {
  return (
    <div className="flex w-[38px] shrink-0 flex-col items-center bg-[#2c2c2c] pt-[11px]">
      <svg viewBox="0 0 24 18" className="h-[18px] w-6" fill="#9f9f9f" stroke="#9f9f9f" strokeWidth="5" strokeLinejoin="round">
        <path d="M12 3 21 15.500H3Z" />
      </svg>
      <div className="mt-[233px] h-[1551px] w-[22px] rounded-full bg-[#9f9f9f]" />
      <svg viewBox="0 0 24 18" className="mt-4 h-[18px] w-6" fill="#9f9f9f" stroke="#9f9f9f" strokeWidth="5" strokeLinejoin="round">
        <path d="M12 15 21 2.500H3Z" />
      </svg>
    </div>
  );
}

export default function App() {
  return (
    <div className="flex h-[2160px] w-[3840px] flex-col overflow-hidden bg-black">
      <div className="font-['Open_Sans',sans-serif]">
        <TabStrip />
        <Toolbar />
        <BookmarksBar />
      </div>
      <div className="h-[3px] shrink-0 border-b border-[#055b61] bg-[#3c8085]" />
      <div className="flex h-[1855px] bg-[#0d1117] font-['Liberation_Sans',Arial,sans-serif]">
        <Sidebar />
        <Main />
        <Scrollbar />
      </div>
    </div>
  );
}
